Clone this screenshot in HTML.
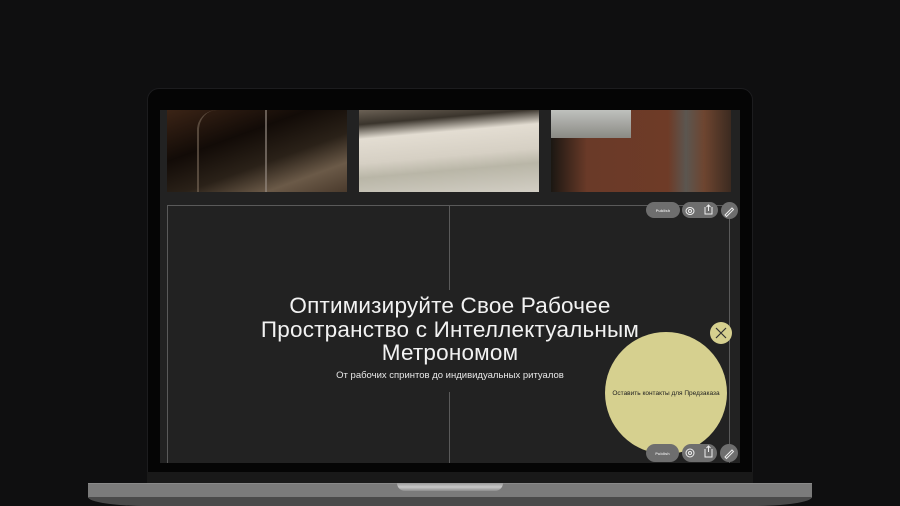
<!DOCTYPE html>
<html><head><meta charset="utf-8"><style>
*{margin:0;padding:0;box-sizing:border-box}
body{width:900px;height:506px;background:#0f0f10;position:relative;overflow:hidden;font-family:"Liberation Sans",sans-serif}
.abs{position:absolute}
.bezel{left:147px;top:88px;width:606px;height:395px;background:#050505;border-radius:12px 12px 0 0;border:1px solid #1c1c1e}
.screen{left:160px;top:110px;width:580px;height:353px;background:#222222;overflow:hidden}
.chin{left:147px;top:472px;width:606px;height:11px;background:#191919}
.base{left:88px;top:483px;width:724px;height:15px;background:#7b7b7b;border-top:1px solid #8a8a8a}
.foot{left:88px;top:497px;width:724px;height:9px;background:#4a4a4a;border-radius:0 0 60px 60px/0 0 9px 9px}
.notch{left:397px;top:483px;width:106px;height:8px;background:linear-gradient(#9a9a9a,#c8c8c8 50%,#8c8c8c);border-radius:0 0 8px 8px}
.img{top:0;height:82px}
.line{background:#5a5a5a}
.title{left:0;width:580px;top:184px;text-align:center;color:#f2f2f2;font-size:22.5px;line-height:23.5px;letter-spacing:0.2px}
.sub{left:0;width:580px;top:260px;text-align:center;color:#e8e8e8;font-size:9.5px}
.circle{left:445px;top:222px;width:122px;height:122px;border-radius:50%;background:#d6d08f;color:#222;font-size:6.5px;display:flex;align-items:center;justify-content:center}
.close{left:550px;top:212px;width:22px;height:22px;border-radius:50%;background:#d6d08f}
.pill{background:#6e6e6e;border-radius:10px;color:#ddd;font-size:4px;display:flex;align-items:center;justify-content:center;font-weight:bold}
.rnd{background:#6e6e6e;border-radius:50%}
</style></head><body>
<div class="abs bezel"></div>
<div class="abs chin"></div>
<div class="abs screen">
 <div class="abs img" style="left:7px;width:180px;background:linear-gradient(160deg,#3b2416 0%,#120b07 35%,#2a2118 60%,#6b5a48 80%,#4a3a2c 100%)">
  <div class="abs" style="left:30px;top:0;width:70px;height:82px;border-right:2px solid #9a8f86;border-left:2px solid #7a6a5a;border-radius:20px 0 0 0;opacity:.6"></div>
 </div>
 <div class="abs img" style="left:199px;width:180px;background:linear-gradient(175deg,#6b6155 0%,#3a342c 15%,#e3ddd2 30%,#d6d0c4 55%,#b9b6a7 70%,#d2cec4 100%)"></div>
 <div class="abs img" style="left:391px;width:180px;background:linear-gradient(90deg,#1b1712 0%,#6a3a28 20%,#6e3b27 65%,#5b5650 75%,#6e4530 85%,#3b2a20 100%)">
  <div class="abs" style="left:0;top:0;width:80px;height:28px;background:linear-gradient(#bfc1bd,#8a8a84)"></div>
 </div>
 <div class="abs line" style="left:7px;top:95px;width:563px;height:1px"></div>
 <div class="abs line" style="left:7px;top:95px;width:1px;height:260px"></div>
 <div class="abs line" style="left:569px;top:95px;width:1px;height:260px"></div>
 <div class="abs line" style="left:289px;top:95px;width:1px;height:85px"></div>
 <div class="abs line" style="left:289px;top:282px;width:1px;height:80px"></div>
 <div class="abs title">Оптимизируйте Свое Рабочее<br>Пространство с Интеллектуальным<br>Метрономом</div>
 <div class="abs sub">От рабочих спринтов до индивидуальных ритуалов</div>
 <div class="abs circle">Оставить контакты для Предзаказа</div>
 <div class="abs close"><svg width="22" height="22"><path d="M6 6L16 16M16 6L6 16" stroke="#333" stroke-width="1.2"/></svg></div>
 <div class="abs pill" style="left:486px;top:92px;width:34px;height:16px">Publish</div>
 <div class="abs pill" style="left:522px;top:92px;width:36px;height:16px"></div>
 <div class="abs rnd" style="left:561px;top:92px;width:17px;height:17px"></div>
 <div class="abs pill" style="left:486px;top:334px;width:33px;height:18px">Publish</div>
 <div class="abs pill" style="left:522px;top:334px;width:35px;height:18px"></div>
 <div class="abs rnd" style="left:560px;top:334px;width:18px;height:18px"></div>
 <svg class="abs" style="left:0;top:0" width="580" height="353">
  <g stroke="#eee" fill="none" stroke-width="1">
   <ellipse cx="530" cy="101" rx="4" ry="3.5"/><circle cx="530" cy="101" r="1.5"/>
   <path d="M545 97v7h7v-7M548.5 95v6M546.5 97l2-2 2 2"/>
   <path d="M565 105l7-7 1.5 1.5-7 7z"/>
   <ellipse cx="530" cy="343" rx="4" ry="4"/><circle cx="530" cy="343" r="1.5"/>
   <path d="M545 339v8h7v-8M548.5 336v6M546.5 338l2-2 2 2"/>
   <path d="M565 347l7-7 1.5 1.5-7 7z"/>
  </g>
 </svg>
</div>
<div class="abs base"></div>
<div class="abs foot"></div>
<div class="abs notch"></div>
</body></html>
